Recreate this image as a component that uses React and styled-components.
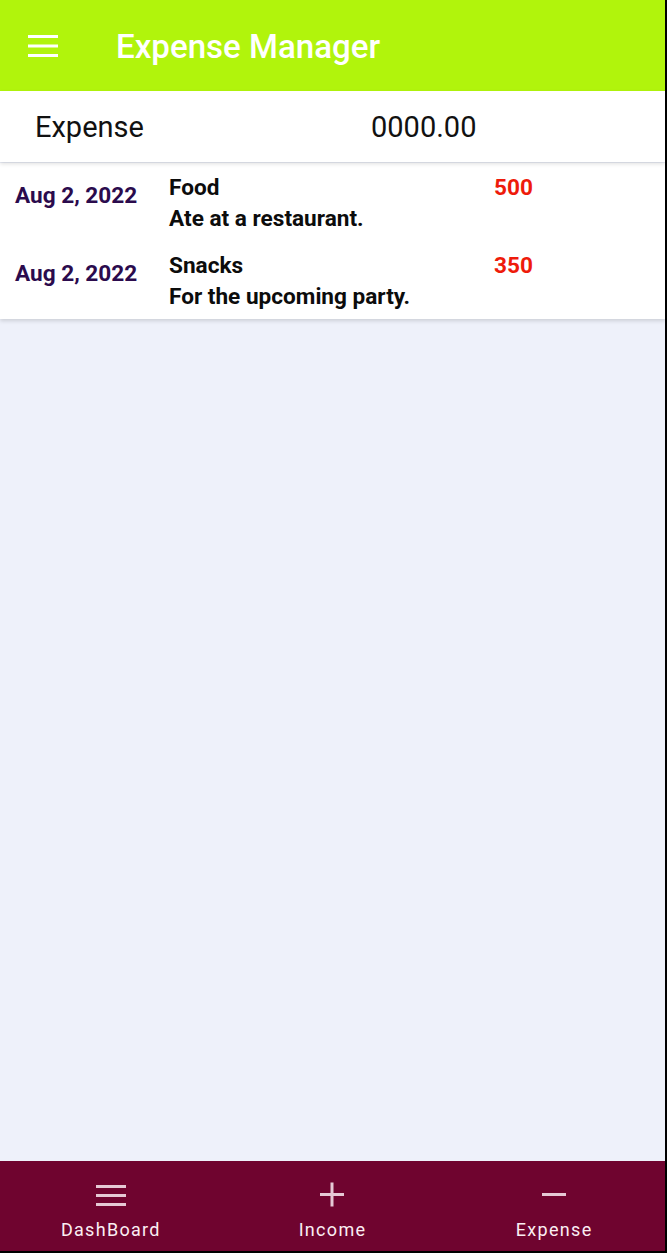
import React from "react";
import styled, { createGlobalStyle } from "styled-components";

const Global = createGlobalStyle`
  html, body { margin: 0; padding: 0; background: #000; }
  body { font-family: Roboto, "Noto Sans", sans-serif; }
  #root { width: 667px; height: 1253px; }
`;

const Screen = styled.div`
  width: 665px;
  height: 1251px;
  display: flex;
  flex-direction: column;
  background: #eef1fa;
  overflow: hidden;
`;

const AppBar = styled.header`
  height: 91px;
  flex: none;
  background: #b1f40c;
  display: flex;
  align-items: center;
  padding-left: 23px;
  gap: 53px;
`;

const MenuButton = styled.div`
  width: 40px;
  height: 40px;
  display: flex;
  align-items: center;
  justify-content: center;
`;

const Title = styled.h1`
  margin: 0;
  color: #fff;
  font-size: 33.1px;
  font-weight: 500;
  margin-top: 2px;
`;

const Summary = styled.div`
  height: 71px;
  flex: none;
  background: #fff;
  display: grid;
  grid-template-columns: 336px 1fr;
  align-items: center;
  padding-left: 35px;
  box-shadow: 0 2px 4px rgba(0, 0, 0, 0.12);
  position: relative;
  z-index: 1;
  font-size: 29px;
  color: #111;
`;

const List = styled.div`
  background: #fff;
  margin-top: 1px;
  box-shadow: 0 2px 4px rgba(0, 0, 0, 0.14);
`;

const Row = styled.div`
  height: 78px;
  display: grid;
  grid-template-columns: 154px 325px 1fr;
  padding-left: 15px;
  padding-top: 1px;
  box-sizing: border-box;
`;

const DateCell = styled.div`
  color: #2b0b4d;
  font-weight: 700;
  font-size: 22.6px;
  padding-top: 18px;
`;

const Details = styled.div`
  display: flex;
  flex-direction: column;
  padding-top: 10px;
  gap: 4px;
  font-weight: 700;
  font-size: 22.6px;
  color: #0c0c0c;
`;

const Amount = styled.div`
  color: #ee1b0b;
  font-weight: 700;
  font-size: 22.6px;
  padding-top: 10px;
`;

const Spacer = styled.div`
  flex: 1;
`;

const BottomNav = styled.nav`
  height: 90px;
  flex: none;
  background: #6f042f;
  display: grid;
  grid-template-columns: repeat(3, 1fr);
`;

const NavItem = styled.div`
  display: flex;
  flex-direction: column;
  align-items: center;
  padding-top: 20px;
  gap: 12px;
`;

const NavIcon = styled.svg`
  width: 32px;
  height: 26px;
  display: block;
`;

const NavLabel = styled.span`
  color: #fbeef3;
  font-size: 18px;
  letter-spacing: 1.3px;
`;

const iconColor = "#e6c9d5";

const items = [
  { date: "Aug 2, 2022", title: "Food", note: "Ate at a restaurant.", amount: "500" },
  { date: "Aug 2, 2022", title: "Snacks", note: "For the upcoming party.", amount: "350" },
];

export default function App() {
  return (
    <>
      <Global />
      <Screen>
        <AppBar>
          <MenuButton>
            <svg width="30" height="22" viewBox="0 0 30 22">
              <rect x="0" y="0" width="30" height="3" fill="#fff" />
              <rect x="0" y="9.5" width="30" height="3" fill="#fff" />
              <rect x="0" y="19" width="30" height="3" fill="#fff" />
            </svg>
          </MenuButton>
          <Title>Expense Manager</Title>
        </AppBar>
        <Summary>
          <span>Expense</span>
          <span>0000.00</span>
        </Summary>
        <List>
          {items.map((it, i) => (
            <Row key={i}>
              <DateCell>{it.date}</DateCell>
              <Details>
                <span>{it.title}</span>
                <span>{it.note}</span>
              </Details>
              <Amount>{it.amount}</Amount>
            </Row>
          ))}
        </List>
        <Spacer />
        <BottomNav>
          <NavItem>
            <NavIcon viewBox="0 0 32 26">
              <rect x="1" y="4" width="30" height="3" fill={iconColor} />
              <rect x="1" y="13" width="30" height="3" fill={iconColor} />
              <rect x="1" y="22" width="30" height="3" fill={iconColor} />
            </NavIcon>
            <NavLabel>DashBoard</NavLabel>
          </NavItem>
          <NavItem>
            <NavIcon viewBox="0 0 32 26">
              <rect x="4" y="12" width="24" height="3" fill={iconColor} />
              <rect x="14.5" y="1.5" width="3" height="24" fill={iconColor} />
            </NavIcon>
            <NavLabel>Income</NavLabel>
          </NavItem>
          <NavItem>
            <NavIcon viewBox="0 0 32 26">
              <rect x="4" y="12" width="24" height="3" fill={iconColor} />
            </NavIcon>
            <NavLabel>Expense</NavLabel>
          </NavItem>
        </BottomNav>
      </Screen>
    </>
  );
}
